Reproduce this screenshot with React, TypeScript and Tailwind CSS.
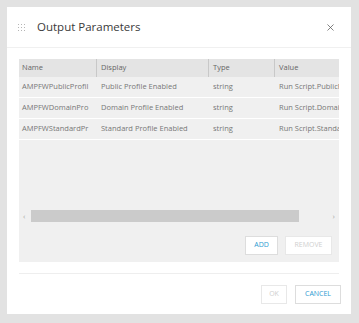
import { X } from "lucide-react";

const rows = [
  { name: "AMPFWPublicProfil", display: "Public Profile Enabled", type: "string", value: "Run Script.PublicProfile" },
  { name: "AMPFWDomainPro", display: "Domain Profile Enabled", type: "string", value: "Run Script.DomainProfile" },
  { name: "AMPFWStandardPr", display: "Standard Profile Enabled", type: "string", value: "Run Script.StandardProfile" },
];

function Grip() {
  return (
    <svg width="7" height="7" viewBox="0 0 7 7" className="text-[#b5b5b5]">
      {[0, 3, 6].map((y) =>
        [0, 3, 6].map((x) => <rect key={`${x}-${y}`} x={x} y={y} width="1" height="1" fill="currentColor" />)
      )}
    </svg>
  );
}

export default function App() {
  return (
    <div
      className="w-[359px] h-[323px] bg-[#e2e2e2] pt-[7px] pl-[7px]"
      style={{ fontFamily: '"Open Sans", sans-serif' }}
    >
      <div className="w-[344px] h-[307px] bg-white flex flex-col">
        {/* header */}
        <div className="h-[41px] flex items-center pl-[11px] pr-[15px] border-b border-[#f0f0f0]">
          <Grip />
          <span className="ml-[12px] text-[11.5px] text-[#3a3a3a]">Output Parameters</span>
          <X className="ml-auto text-[#555]" size={11} strokeWidth={1.6} />
        </div>

        {/* grid */}
        <div className="mx-[12px] mt-[11px] h-[203px] bg-[#f0f0f0] flex flex-col overflow-hidden">
          <div className="h-[18px] bg-[#e4e4e4] flex text-[7.5px] text-[#666] shrink-0">
            <div className="w-[78px] pl-[3px] flex items-center border-r border-[#c8c8c8]">Name</div>
            <div className="w-[112px] pl-[4px] flex items-center border-r border-[#c8c8c8]">Display</div>
            <div className="w-[66px] pl-[4px] flex items-center border-r border-[#c8c8c8]">Type</div>
            <div className="flex-1 pl-[4px] flex items-center">Value</div>
          </div>
          {rows.map((r) => (
            <div key={r.name} className="h-[21px] flex text-[7.5px] text-[#777] border-b border-white shrink-0 whitespace-nowrap">
              <div className="w-[78px] pl-[3px] flex items-center overflow-hidden">{r.name}</div>
              <div className="w-[112px] pl-[4px] flex items-center overflow-hidden">{r.display}</div>
              <div className="w-[66px] pl-[4px] flex items-center overflow-hidden">{r.type}</div>
              <div className="flex-1 pl-[4px] flex items-center overflow-hidden">{r.value}</div>
            </div>
          ))}
          <div className="mt-auto flex items-center h-[12px] px-[4px]">
            <span className="text-[8px] text-[#aaa] w-[8px]">‹</span>
            <div className="w-[268px] h-[12px] bg-[#cbcbcb]" />
            <span className="ml-auto text-[8px] text-[#aaa]">›</span>
          </div>
          <div className="flex justify-end gap-[7px] mt-[14px] mb-[7px] mr-[7px]">
            <button className="h-[19px] w-[33px] bg-white border border-[#ddd] text-[7px] text-[#2c9ad1]">ADD</button>
            <button className="h-[19px] w-[47px] bg-white border border-[#e8e8e8] text-[7px] text-[#cfcfcf]">REMOVE</button>
          </div>
        </div>

        {/* footer */}
        <div className="mx-[12px] mt-[11px] border-t border-[#eee]" />
        <div className="flex justify-end gap-[8px] mt-[11px] mr-[10px]">
          <button className="h-[19px] w-[26px] bg-white border border-[#e8e8e8] text-[7px] text-[#cfcfcf]">OK</button>
          <button className="h-[19px] w-[46px] bg-white border border-[#ddd] text-[7px] text-[#2c9ad1]">CANCEL</button>
        </div>
      </div>
    </div>
  );
}
